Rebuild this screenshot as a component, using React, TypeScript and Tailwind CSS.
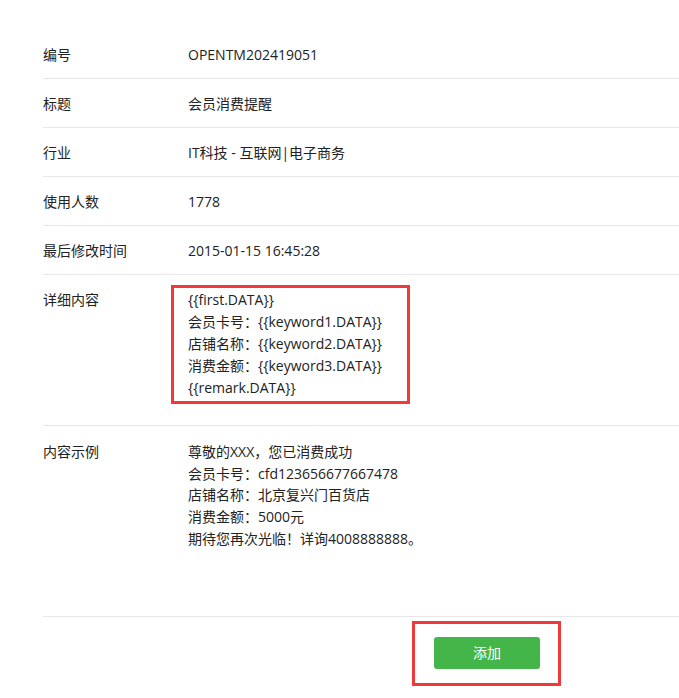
import React from "react";

const font = { fontFamily: '"Open Sans", "Noto Sans CJK SC", sans-serif' };

function Row({ label, value }: { label: string; value: string }) {
  return (
    <div className="flex border-b border-[#e7e7eb] pt-[14px] pb-[12px] leading-[22px]">
      <div className="w-[145px] shrink-0">{label}</div>
      <div>{value}</div>
    </div>
  );
}

export default function App() {
  return (
    <div className="w-[679px] h-[698px] bg-white text-[14px] text-[#222]" style={font}>
      <div className="pl-[43px] pt-[30px]">
        <Row label="编号" value="OPENTM202419051" />
        <Row label="标题" value="会员消费提醒" />
        <Row label="行业" value="IT科技 - 互联网|电子商务" />
        <Row label="使用人数" value="1778" />
        <Row label="最后修改时间" value="2015-01-15 16:45:28" />
        <div className="flex border-b border-[#e7e7eb] pt-[14px] pb-[26px] leading-[22px]">
          <div className="w-[145px] shrink-0">详细内容</div>
          <div className="relative">
            <div className="absolute left-[-17px] top-[-4px] w-[239px] h-[119px] border-[3px] border-[#f0393b]" />
            <div>{"{{first.DATA}}"}</div>
            <div>会员卡号：{"{{keyword1.DATA}}"}</div>
            <div>店铺名称：{"{{keyword2.DATA}}"}</div>
            <div>消费金额：{"{{keyword3.DATA}}"}</div>
            <div>{"{{remark.DATA}}"}</div>
          </div>
        </div>
        <div className="flex border-b border-[#e7e7eb] pt-[15px] pb-[66px] leading-[21.7px]">
          <div className="w-[145px] shrink-0">内容示例</div>
          <div>
            <div>尊敬的XXX，您已消费成功</div>
            <div>会员卡号：cfd123656677667478</div>
            <div>店铺名称：北京复兴门百货店</div>
            <div>消费金额：5000元</div>
            <div>期待您再次光临！详询4008888888。</div>
          </div>
        </div>
        <div className="flex pt-[20px] pl-[391px]">
          <div className="relative">
            <div className="absolute left-[-22px] top-[-16px] w-[149px] h-[65px] border-[3px] border-[#f0393b]" />
            <button className="w-[106px] h-[32px] rounded-[3px] bg-[#44b549] text-white text-[14px] leading-[32px]">
              添加
            </button>
          </div>
        </div>
      </div>
    </div>
  );
}
